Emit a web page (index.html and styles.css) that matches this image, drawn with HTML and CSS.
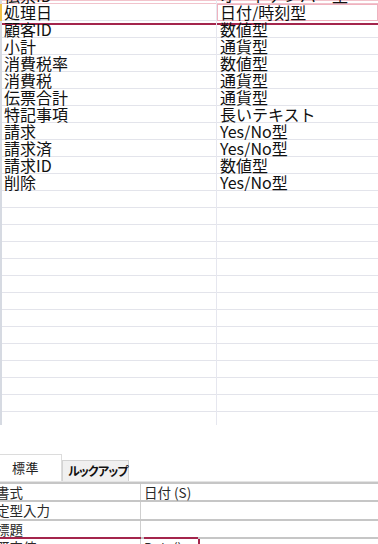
FILE: index.html
```html
<!DOCTYPE html>
<html lang="ja">
<head>
<meta charset="utf-8">
<title>テーブル デザイン</title>
<link rel="stylesheet" href="styles.css">
</head>
<body>
<div class="screen">
  <div class="grid">
    <div class="row partial"><div class="c1">伝票ID</div><div class="c2">オートナンバー型</div></div>
    <div class="row sel"><div class="c1">処理日</div><div class="c2 edit">日付/時刻型</div></div>
    <div class="row cur"><div class="c1">顧客ID</div><div class="c2">数値型</div></div>
    <div class="row"><div class="c1">小計</div><div class="c2">通貨型</div></div>
    <div class="row"><div class="c1">消費税率</div><div class="c2">数値型</div></div>
    <div class="row"><div class="c1">消費税</div><div class="c2">通貨型</div></div>
    <div class="row"><div class="c1">伝票合計</div><div class="c2">通貨型</div></div>
    <div class="row"><div class="c1">特記事項</div><div class="c2">長いテキスト</div></div>
    <div class="row"><div class="c1">請求</div><div class="c2">Yes/No型</div></div>
    <div class="row"><div class="c1">請求済</div><div class="c2">Yes/No型</div></div>
    <div class="row"><div class="c1">請求ID</div><div class="c2">数値型</div></div>
    <div class="row"><div class="c1">削除</div><div class="c2">Yes/No型</div></div>
    <div class="row"><div class="c1"></div><div class="c2"></div></div>
    <div class="row"><div class="c1"></div><div class="c2"></div></div>
    <div class="row"><div class="c1"></div><div class="c2"></div></div>
    <div class="row"><div class="c1"></div><div class="c2"></div></div>
    <div class="row"><div class="c1"></div><div class="c2"></div></div>
    <div class="row"><div class="c1"></div><div class="c2"></div></div>
    <div class="row"><div class="c1"></div><div class="c2"></div></div>
    <div class="row"><div class="c1"></div><div class="c2"></div></div>
    <div class="row"><div class="c1"></div><div class="c2"></div></div>
    <div class="row"><div class="c1"></div><div class="c2"></div></div>
    <div class="row"><div class="c1"></div><div class="c2"></div></div>
    <div class="row"><div class="c1"></div><div class="c2"></div></div>
    <div class="row"><div class="c1"></div><div class="c2"></div></div>
    <div class="row last"><div class="c1"></div><div class="c2"></div></div>
  </div>

  <div class="tabs">
    <div class="tab active">標準</div>
    <div class="tab">ルックアップ</div>
  </div>

  <div class="props">
    <div class="prow"><div class="pk">書式</div><div class="pv">日付 (S)</div></div>
    <div class="prow tall"><div class="pk">定型入力</div><div class="pv"></div></div>
    <div class="prow"><div class="pk">標題</div><div class="pv"></div></div>
    <div class="prow psel"><div class="pk">既定値</div><div class="pv"><span class="val">Date()</span></div></div>
  </div>
</div>
</body>
</html>
```

FILE: styles.css
```css
html, body {
  margin: 0;
  padding: 0;
  background: #ffffff;
}

.screen {
  width: 378px;
  height: 544px;
  overflow: hidden;
  font-family: "Noto Sans CJK JP", "Noto Sans", sans-serif;
  color: #111111;
}

/* ---- field grid ---- */
.grid {
  display: flex;
  flex-direction: column;
}

.row {
  display: flex;
  height: 17px;
  box-sizing: border-box;
  border-left: 2px solid #d6dae2;
  background: linear-gradient(#e3e4eb, #e3e4eb) 0 100% / 100% 1px no-repeat;
  font-size: 16px;
  line-height: 17px;
}

.c1 {
  width: 215px;
  flex: none;
  box-sizing: border-box;
  padding-left: 2px;
  border-right: 1px solid #e6e7ef;
  white-space: nowrap;
  overflow: hidden;
}

.c2 {
  flex: 1;
  box-sizing: border-box;
  padding-left: 3px;
  white-space: nowrap;
  overflow: hidden;
}

.row.partial {
  margin-top: -13px;
  background:
    linear-gradient(#f2c4cc, #f2c4cc) 0 13px / 100% 1px no-repeat,
    linear-gradient(#f1c3cc, #f1c3cc) 0 100% / 100% 1px no-repeat;
}

.row.sel {
  border-left-color: #f0c24a;
}

.c2.edit {
  box-shadow: inset 0 0 0 1px #efb2bf;
}

.row.cur {
  background:
    linear-gradient(#a4254c, #a4254c) 0 2px / 100% 2px no-repeat,
    linear-gradient(#e3e4eb, #e3e4eb) 0 100% / 100% 1px no-repeat;
}

.row.last {
  height: 13px;
  background: none;
}

/* ---- tabs ---- */
.tabs {
  display: flex;
  align-items: flex-end;
  margin-top: 29px;
  height: 27px;
  font-size: 13px;
}

.tab {
  box-sizing: border-box;
  height: 21px;
  width: 67px;
  background: #f0f0f0;
  border: 1px solid #d3d3d3;
  border-bottom: none;
  font-size: 12px;
  font-weight: bold;
  letter-spacing: -2.2px;
  line-height: 20px;
  padding-left: 5px;
  color: #111;
}

.tab.active {
  width: 62px;
  height: 27px;
  background: #ffffff;
  border-color: #dcdcdc;
  border-left: none;
  font-size: 13px;
  font-weight: normal;
  letter-spacing: 0.5px;
  line-height: 26px;
  padding-left: 12px;
  color: #222;
}

/* ---- property grid ---- */
.props {
  border-top: 1px solid #e4e4e4;
  font-size: 13.5px;
  line-height: 16px;
  color: #2a2a2a;
}

.prow {
  display: flex;
  height: 18px;
  box-sizing: border-box;
  border-top: 2px solid #c6c6c6;
}

.prow.tall {
  height: 19px;
}

.pk {
  width: 141px;
  flex: none;
  box-sizing: border-box;
  border-right: 1px solid #cfcfcf;
  text-indent: -4px;
  white-space: nowrap;
  overflow: hidden;
}

.pv {
  flex: 1;
  padding-left: 3px;
  white-space: nowrap;
}

.prow.psel {
  height: 20px;
}

.prow.psel .pk {
  box-shadow: 0 -2px 0 #a4254c;
}

.val {
  display: inline-block;
  width: 54px;
  height: 16px;
  box-shadow: 0 -2px 0 #a4254c, 2px 0 0 #a4254c;
}
```
